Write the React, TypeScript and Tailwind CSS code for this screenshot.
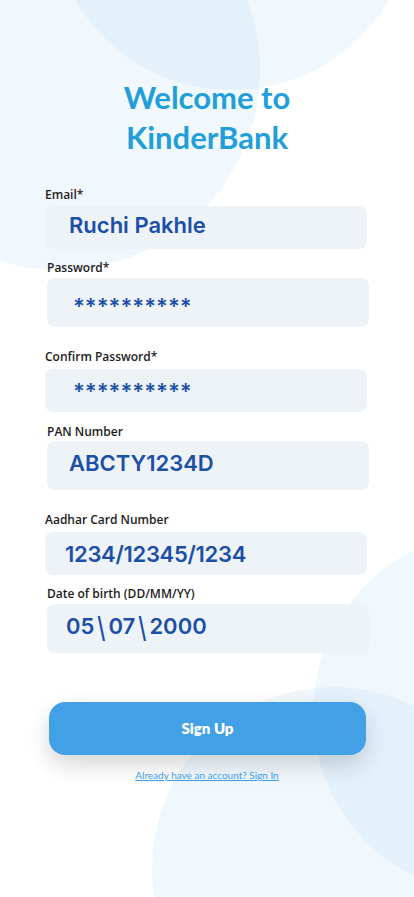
const labelClass = "block text-[12px] leading-4 font-semibold text-[#1c1c1c] [font-family:'Open_Sans','Noto_Sans',sans-serif]";
const boxClass = "flex h-[43px] w-[322px] items-center rounded-lg bg-[#eef3f7] text-[22px] font-semibold text-[#1b4fa8] [font-family:Inter,'Noto_Sans',sans-serif]";

export default function App() {
  return (
    <div className="relative h-[897px] w-[414px] overflow-hidden bg-white">
      {/* background bubbles */}
      <div className="absolute left-[-140px] top-[-130px] h-[400px] w-[400px] rounded-full bg-[rgba(56,160,230,0.07)]" />
      <div className="absolute left-[50px] top-[-274px] h-[364px] w-[364px] rounded-full bg-[rgba(56,160,230,0.07)]" />
      <div className="absolute left-[313px] top-[531px] h-[364px] w-[364px] rounded-full bg-[rgba(56,160,230,0.07)]" />
      <div className="absolute left-[152px] top-[687px] h-[362px] w-[362px] rounded-full bg-[rgba(56,160,230,0.07)]" />

      <div className="relative flex flex-col">
        <h1 className="mt-[77px] text-center text-[31px] leading-10 font-bold text-[#229fd9] [font-family:Lato,'Noto_Sans',sans-serif]">
          Welcome to
          <br />
          KinderBank
        </h1>

        <div className="ml-[45px] mt-[30px]">
          <label className={labelClass}>Email*</label>
          <div className={`${boxClass} mt-[3px] pl-[24px] pb-[4px]`}>Ruchi Pakhle</div>
        </div>

        <div className="ml-[47px] mt-[11px]">
          <label className={labelClass}>Password*</label>
          <div className={`${boxClass} mt-[2px] h-[49px] pl-[26px] pt-[8px] font-bold`}>**********</div>
        </div>

        <div className="ml-[45px] mt-[22px]">
          <label className={labelClass}>Confirm Password*</label>
          <div className={`${boxClass} mt-[4px] pl-[28px] pt-[2px] font-bold`}>**********</div>
        </div>

        <div className="ml-[47px] mt-[12px]">
          <label className={labelClass}>PAN Number</label>
          <div className={`${boxClass} mt-[1px] h-[49px] pl-[22px] pb-[5px]`}>ABCTY1234D</div>
        </div>

        <div className="ml-[45px] mt-[22px]">
          <label className={labelClass}>Aadhar Card Number</label>
          <div className={`${boxClass} mt-[4px] pl-[20px] pt-[2px] tracking-[-0.3px]`}>1234/12345/1234</div>
        </div>

        <div className="ml-[47px] mt-[11px]">
          <label className={labelClass}>Date of birth (DD/MM/YY)</label>
          <div className={`${boxClass} mt-[2px] h-[49px] pl-[19px] pb-[4px]`}>
            05<span className="mx-[3px] inline-block translate-y-[2px] scale-y-[1.3] font-medium">\</span>07<span className="mx-[3px] inline-block translate-y-[2px] scale-y-[1.3] font-medium">\</span>2000
          </div>
        </div>

        <button
          type="button"
          className="ml-[49px] mt-[49px] flex h-[53px] w-[317px] items-center justify-center rounded-2xl bg-[#42a0e6] text-[15px] font-extrabold text-white shadow-[0_10px_22px_rgba(0,0,0,0.16)] [font-family:Lato,'Noto_Sans',sans-serif]"
        >
          Sign Up
        </button>

        <a
          href="#"
          className="mt-[13px] self-center text-[10px] leading-[14px] text-[#3d9be6] underline [font-family:Lato,'Noto_Sans',sans-serif]"
        >
          Already have an account? Sign In
        </a>
      </div>
    </div>
  );
}
